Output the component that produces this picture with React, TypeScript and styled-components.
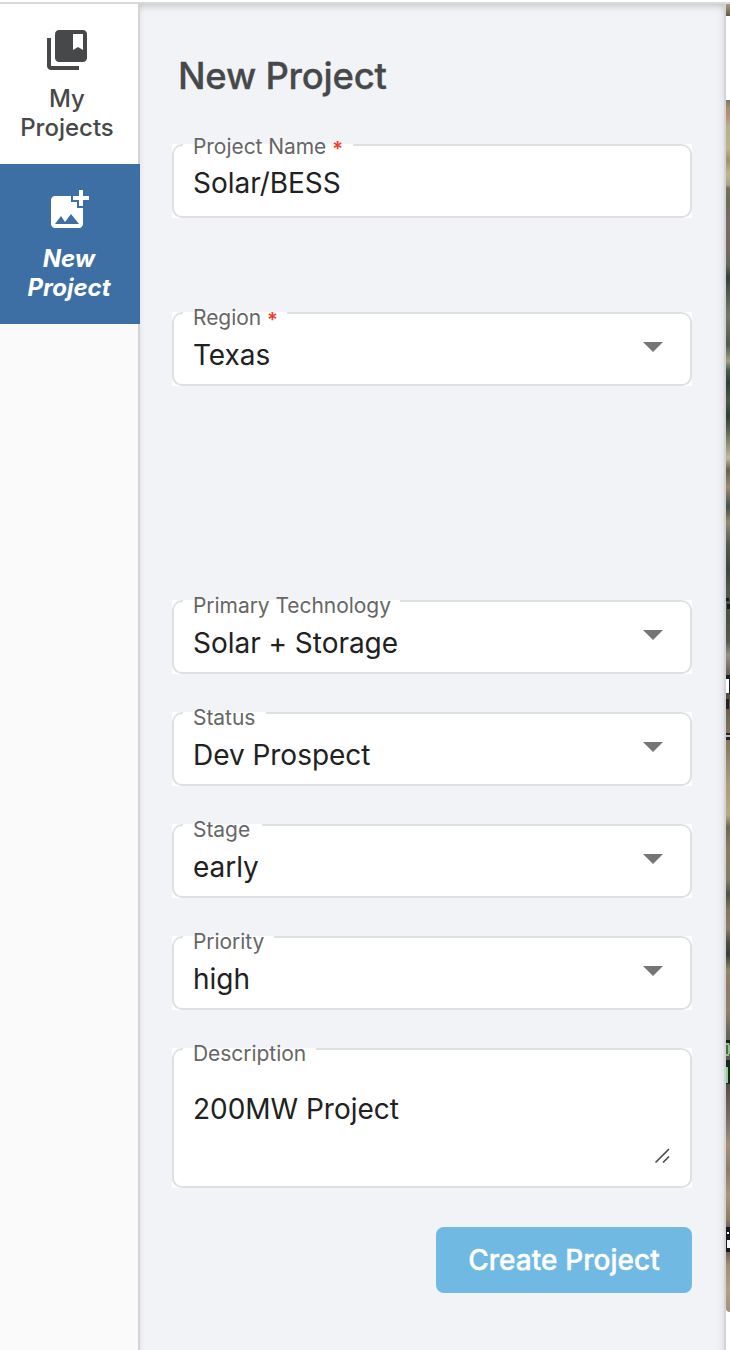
import React from "react";
import styled, { createGlobalStyle, css } from "styled-components";

const GlobalStyle = createGlobalStyle`
  *, *::before, *::after { box-sizing: border-box; }
  body { margin: 0; background: #fff; font-family: Inter, "Liberation Sans", sans-serif; -webkit-font-smoothing: antialiased; }
`;

const Page = styled.div`
  display: flex;
  flex-direction: column;
  width: 730px;
  height: 1350px;
  overflow: hidden;
`;

const TopBar = styled.header`
  flex: 0 0 4px;
  background: #fff;
  border-bottom: 2px solid #d9d9d9;
`;

const Body = styled.div`
  display: flex;
  flex: 1;
  min-height: 0;
`;

const Rail = styled.nav`
  width: 140px;
  flex: none;
  background: linear-gradient(to right, #fafafa 138px, #d3d4d4 138px);
`;

const RailItem = styled.button<{ $active?: boolean }>`
  display: flex;
  flex-direction: column;
  align-items: center;
  width: 100%;
  height: 160px;
  padding: 22px 0 0;
  border: 0;
  font: 500 24px/29px Inter, sans-serif;
  color: #47484a;
  background: linear-gradient(to right, #fff 138px, #d3d4d4 138px);
  padding-right: 6px;
  ${(p) =>
    p.$active &&
    css`
      padding-right: 2px;
      font-style: italic;
      font-weight: 700;
      color: #fff;
      background: #3d6fa5;
    `}
`;

const RailIcon = styled.svg`
  width: 48px;
  height: 48px;
  flex: none;
  fill: currentColor;
`;

const RailLabel = styled.span`
  margin-top: 10px;
  text-align: center;
`;

const Panel = styled.main`
  width: 586px;
  flex: none;
  padding: 0 32px;
  background: #f1f3f7;
  border-right: 2px solid #d3d4d6;
  box-shadow: inset 0 9px 9px -8px rgba(0, 0, 0, 0.24), inset 6px 0 6px -6px rgba(0, 0, 0, 0.08),
    inset -7px 0 7px -6px rgba(0, 0, 0, 0.1);
`;

const Title = styled.h1`
  margin: 0;
  padding: 48px 0 0 6px;
  height: 140px;
  font-size: 36.5px;
  line-height: 48px;
  font-weight: 500;
  letter-spacing: -0.25px;
  color: #47484a;
  -webkit-text-stroke: 0.3px #47484a;
`;

const Field = styled.div<{ $height?: number; $gap: number }>`
  position: relative;
  width: 520px;
  height: ${(p) => p.$height ?? 74}px;
  margin-bottom: ${(p) => p.$gap}px;
  background: #fff;
`;

const Outline = styled.div`
  display: flex;
  height: 100%;
`;

const OutlineStart = styled.div`
  width: 11px;
  border: 2px solid #e0e0e0;
  border-right: 0;
  border-radius: 10px 0 0 10px;
`;

const Notch = styled.div<{ $width: number }>`
  width: ${(p) => p.$width}px;
  border-bottom: 2px solid #e0e0e0;
`;

const OutlineEnd = styled.div`
  flex: 1;
  border: 2px solid #e0e0e0;
  border-left: 0;
  border-radius: 0 10px 10px 0;
`;

const Label = styled.label<{ $top: number }>`
  position: absolute;
  left: 21px;
  top: ${(p) => p.$top}px;
  font-size: 21px;
  line-height: 24px;
  letter-spacing: -0.05px;
  color: #666;
  white-space: pre;
`;

const Required = styled.span`
  margin-left: 1px;
  color: #f03a2b;
  font-size: 20px;
  font-weight: 600;
  line-height: 1;
  vertical-align: -2px;
`;

const Value = styled.div<{ $top: number }>`
  position: absolute;
  left: 21px;
  top: ${(p) => p.$top}px;
  font-size: 28px;
  line-height: 34px;
  letter-spacing: -0.03px;
  color: #212121;
  white-space: nowrap;
`;

const Arrow = styled.span`
  position: absolute;
  right: 29px;
  top: 30px;
  border: 10px solid transparent;
  border-top-color: #757575;
  border-bottom: 0;
`;

const ResizeGrip = styled.svg`
  position: absolute;
  right: 21px;
  bottom: 24px;
  width: 17px;
  height: 17px;
  stroke: #4a4a4a;
  stroke-width: 1.6;
`;

const Actions = styled.div`
  display: flex;
  justify-content: flex-end;
`;

const SubmitButton = styled.button`
  width: 256px;
  height: 66px;
  padding: 0;
  border: 0;
  border-radius: 8px;
  background: #70b9e3;
  color: #fff;
  font: 500 28px/34px Inter, sans-serif;
  letter-spacing: 0.05px;
  -webkit-text-stroke: 0.4px #fff;
`;

const MapEdge = styled.aside`
  flex: 1;
  display: flex;
  flex-direction: column;
`;

const MapTop = styled.div`
  height: 12px;
  margin-bottom: 84px;
  background: linear-gradient(#a79c83, #625744);
`;

const MapTerrain = styled.div`
  height: 1212px;
  overflow: hidden;
  border-bottom-left-radius: 6px;
`;

const MapArt = styled.svg`
  display: block;
`;

const terrain: [number, string][] = [
  [100, "#777665"], [108, "#a58e76"], [116, "#b98b76"], [126, "#b9ad8c"], [148, "#bdb48f"],
  [160, "#a1916f"], [174, "#c0b590"], [185, "#aaa186"], [188, "#75705a"], [200, "#6b6a58"],
  [220, "#766c63"], [245, "#746a64"], [265, "#65675a"], [277, "#353f38"], [292, "#51584d"],
  [315, "#747763"], [345, "#515b48"], [361, "#a09f89"], [370, "#4a594c"], [383, "#303f36"],
  [400, "#4c5647"], [416, "#2f3e37"], [430, "#596250"], [458, "#c1b89d"], [470, "#665f50"],
  [487, "#9a8b70"], [507, "#455047"], [522, "#928872"], [545, "#53574c"], [570, "#3d463e"],
  [590, "#50564a"], [620, "#4a5144"], [642, "#57594e"], [655, "#989082"], [670, "#70695b"],
  [690, "#50483e"], [720, "#756957"], [750, "#8e7d64"], [780, "#a8997a"], [815, "#b6aa83"],
  [827, "#6f6850"], [850, "#8b7b63"], [880, "#837b66"], [894, "#4e5144"], [910, "#83745d"],
  [928, "#8c7f67"], [942, "#4b4c44"], [955, "#393e38"], [970, "#918466"], [990, "#8e7866"],
  [1010, "#90806e"], [1035, "#646457"], [1085, "#534f48"], [1120, "#767168"], [1145, "#a58f7a"],
  [1170, "#927967"], [1195, "#ae937d"], [1220, "#8f7865"], [1240, "#433a33"], [1265, "#a38b75"],
  [1290, "#b99a85"], [1312, "#a2917d"],
];

const marks: [number, number, number, number, string][] = [
  [0, 598, 3, 3, "#17191b"], [1, 604, 3, 5, "#17191b"], [0, 675, 4, 4, "#1c1e24"],
  [0, 679, 3, 14, "#fff"], [3, 679, 1, 15, "#1c1e24"], [0, 699, 3, 10, "#20222a"],
  [0, 733, 4, 2, "#23242a"], [0, 735, 4, 2, "#bbb"], [0, 737, 4, 3, "#23242a"],
  [0, 1040, 4, 3, "#18231a"], [0, 1043, 3, 2, "#80cc80"], [2, 1045, 2, 9, "#80cc80"],
  [0, 1054, 3, 2, "#80cc80"], [0, 1060, 4, 24, "#17271a"], [0, 1067, 2, 16, "#8bd58b"],
  [0, 1227, 4, 25, "#181719"], [1, 1232, 2, 2, "#fff"], [1, 1240, 3, 8, "#f5f5f5"],
];

type FormFieldProps = {
  label: string;
  value: string;
  notch: number;
  gap: number;
  required?: boolean;
  kind?: "text" | "select" | "area";
};

function FormField({ label, value, notch, gap, required, kind = "select" }: FormFieldProps) {
  return (
    <Field $gap={gap} $height={kind === "area" ? 140 : 74}>
      <Outline>
        <OutlineStart />
        <Notch $width={notch} />
        <OutlineEnd />
      </Outline>
      <Label $top={kind === "text" ? -9 : -6}>
        {label}
        {required && <Required> *</Required>}
      </Label>
      <Value $top={kind === "text" ? 22 : kind === "area" ? 44 : 26}>{value}</Value>
      {kind === "select" && <Arrow />}
      {kind === "area" && (
        <ResizeGrip viewBox="0 0 17 17">
          <path d="M1.5 15.5 15 2M9 15.5l6-6" />
        </ResizeGrip>
      )}
    </Field>
  );
}

export default function App() {
  return (
    <Page>
      <GlobalStyle />
      <TopBar />
      <Body>
        <Rail>
          <RailItem>
            <RailIcon viewBox="0 0 24 24">
              <path d="M4 6H2v14c0 1.1.9 2 2 2h14v-2H4V6zm16-4H8c-1.1 0-2 .9-2 2v12c0 1.1.9 2 2 2h12c1.1 0 2-.9 2-2V4c0-1.1-.9-2-2-2zm0 10l-2.5-1.5L15 12V4h5v8z" />
            </RailIcon>
            <RailLabel>My<br />Projects</RailLabel>
          </RailItem>
          <RailItem $active>
            <RailIcon viewBox="0 0 24 24">
              <path d="M19 7v2.99s-1.99.01-2 0V7h-3s.01-1.99 0-2h3V2h2v3h3v2h-3zm-3 4V8h-3V5H5c-1.1 0-2 .9-2 2v12c0 1.1.9 2 2 2h12c1.1 0 2-.9 2-2v-8h-3zM5 19l3-4 2 3 3-4 4 5H5z" />
            </RailIcon>
            <RailLabel>New<br />Project</RailLabel>
          </RailItem>
        </Rail>
        <Panel>
          <Title>New Project</Title>
          <FormField label="Project Name" value="Solar/BESS" notch={170} gap={94} required kind="text" />
          <FormField label="Region" value="Texas" notch={104} gap={214} required />
          <FormField label="Primary Technology" value="Solar + Storage" notch={217} gap={38} />
          <FormField label="Status" value="Dev Prospect" notch={83} gap={38} />
          <FormField label="Stage" value="early" notch={79} gap={38} />
          <FormField label="Priority" value="high" notch={91} gap={38} />
          <FormField label="Description" value="200MW Project" notch={133} gap={39} kind="area" />
          <Actions>
            <SubmitButton>Create Project</SubmitButton>
          </Actions>
        </Panel>
        <MapEdge>
          <MapTop />
          <MapTerrain>
            <MapArt width="4" height="1212" viewBox="0 100 4 1212">
              <defs>
                <linearGradient id="terrain" x1="0" y1="0" x2="0" y2="1">
                  {terrain.map(([y, color]) => (
                    <stop key={y} offset={(y - 100) / 1212} stopColor={color} />
                  ))}
                </linearGradient>
              </defs>
              <rect y="100" width="4" height="1212" fill="url(#terrain)" />
              {marks.map(([x, y, w, h, color]) => (
                <rect key={`${x}-${y}`} x={x} y={y} width={w} height={h} fill={color} />
              ))}
            </MapArt>
          </MapTerrain>
        </MapEdge>
      </Body>
    </Page>
  );
}
